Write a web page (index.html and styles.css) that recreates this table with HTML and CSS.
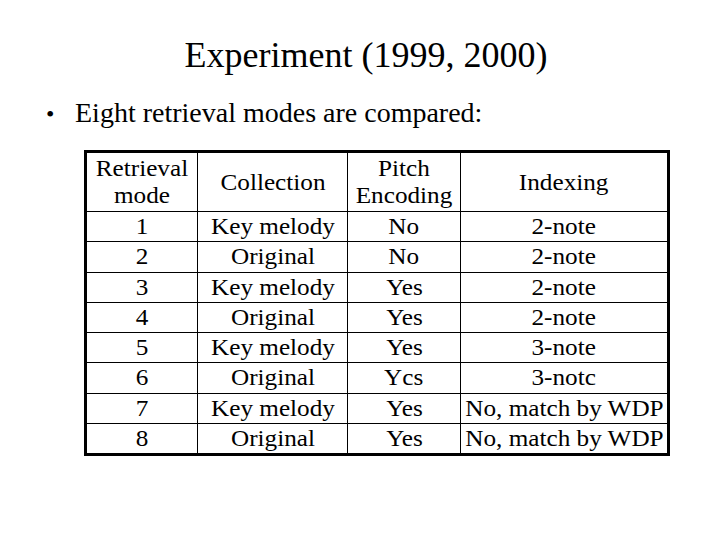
FILE: index.html
```html
<!DOCTYPE html>
<html>
<head>
<meta charset="utf-8">
<link rel="stylesheet" href="styles.css">
</head>
<body>
<div class="slide">
  <h1 class="title">Experiment (1999, 2000)</h1>
  <div class="bullet"><span class="dot">•</span><span class="btext">Eight retrieval modes are compared:</span></div>
  <div class="tablebox">
    <div class="grid">
      <div class="cell head"><span>Retrieval<br>mode</span></div>
      <div class="cell head"><span>Collection</span></div>
      <div class="cell head"><span>Pitch<br>Encoding</span></div>
      <div class="cell head"><span>Indexing</span></div>

      <div class="cell"><span>1</span></div>
      <div class="cell"><span>Key melody</span></div>
      <div class="cell"><span>No</span></div>
      <div class="cell"><span>2-note</span></div>

      <div class="cell"><span>2</span></div>
      <div class="cell"><span>Original</span></div>
      <div class="cell"><span>No</span></div>
      <div class="cell"><span>2-note</span></div>

      <div class="cell"><span>3</span></div>
      <div class="cell"><span>Key melody</span></div>
      <div class="cell"><span>Yes</span></div>
      <div class="cell"><span>2-note</span></div>

      <div class="cell"><span>4</span></div>
      <div class="cell"><span>Original</span></div>
      <div class="cell"><span>Yes</span></div>
      <div class="cell"><span>2-note</span></div>

      <div class="cell"><span>5</span></div>
      <div class="cell"><span>Key melody</span></div>
      <div class="cell"><span>Yes</span></div>
      <div class="cell"><span>3-note</span></div>

      <div class="cell"><span>6</span></div>
      <div class="cell"><span>Original</span></div>
      <div class="cell"><span>Ycs</span></div>
      <div class="cell"><span>3-notc</span></div>

      <div class="cell"><span>7</span></div>
      <div class="cell"><span>Key melody</span></div>
      <div class="cell"><span>Yes</span></div>
      <div class="cell"><span>No, match by WDP</span></div>

      <div class="cell"><span>8</span></div>
      <div class="cell"><span>Original</span></div>
      <div class="cell"><span>Yes</span></div>
      <div class="cell"><span>No, match by WDP</span></div>
    </div>
  </div>
</div>
</body>
</html>
```

FILE: styles.css
```css
html, body {
  margin: 0;
  padding: 0;
  background: #ffffff;
}
.slide {
  width: 720px;
  height: 540px;
  font-family: "Liberation Serif", "Times New Roman", serif;
  color: #000;
  padding-top: 35px;
  box-sizing: border-box;
}
.title {
  margin: 0;
  padding-left: 12px;
  font-size: 36px;
  line-height: 40px;
  font-weight: normal;
  text-align: center;
}
.bullet {
  display: flex;
  align-items: baseline;
  margin-top: 22px;
  padding-left: 46px;
  font-size: 28px;
  line-height: 32px;
}
.dot {
  width: 29px;
  font-size: 24px;
}
.tablebox {
  margin-top: 20px;
  margin-left: 84px;
  width: 580px;
  border: 3px solid #000;
}
.grid {
  display: grid;
  grid-template-columns: 110px 149px 112px 206px;
  grid-template-rows: 58px repeat(8, 1fr);
  height: 300px;
  gap: 1px;
  background: #000;
  font-size: 24px;
}
.cell {
  background: #fff;
  display: flex;
  align-items: center;
  justify-content: center;
  text-align: center;
  line-height: 27px;
  white-space: nowrap;
}
.cell span {
  display: inline-block;
  transform: scaleX(1.05);
}
```
